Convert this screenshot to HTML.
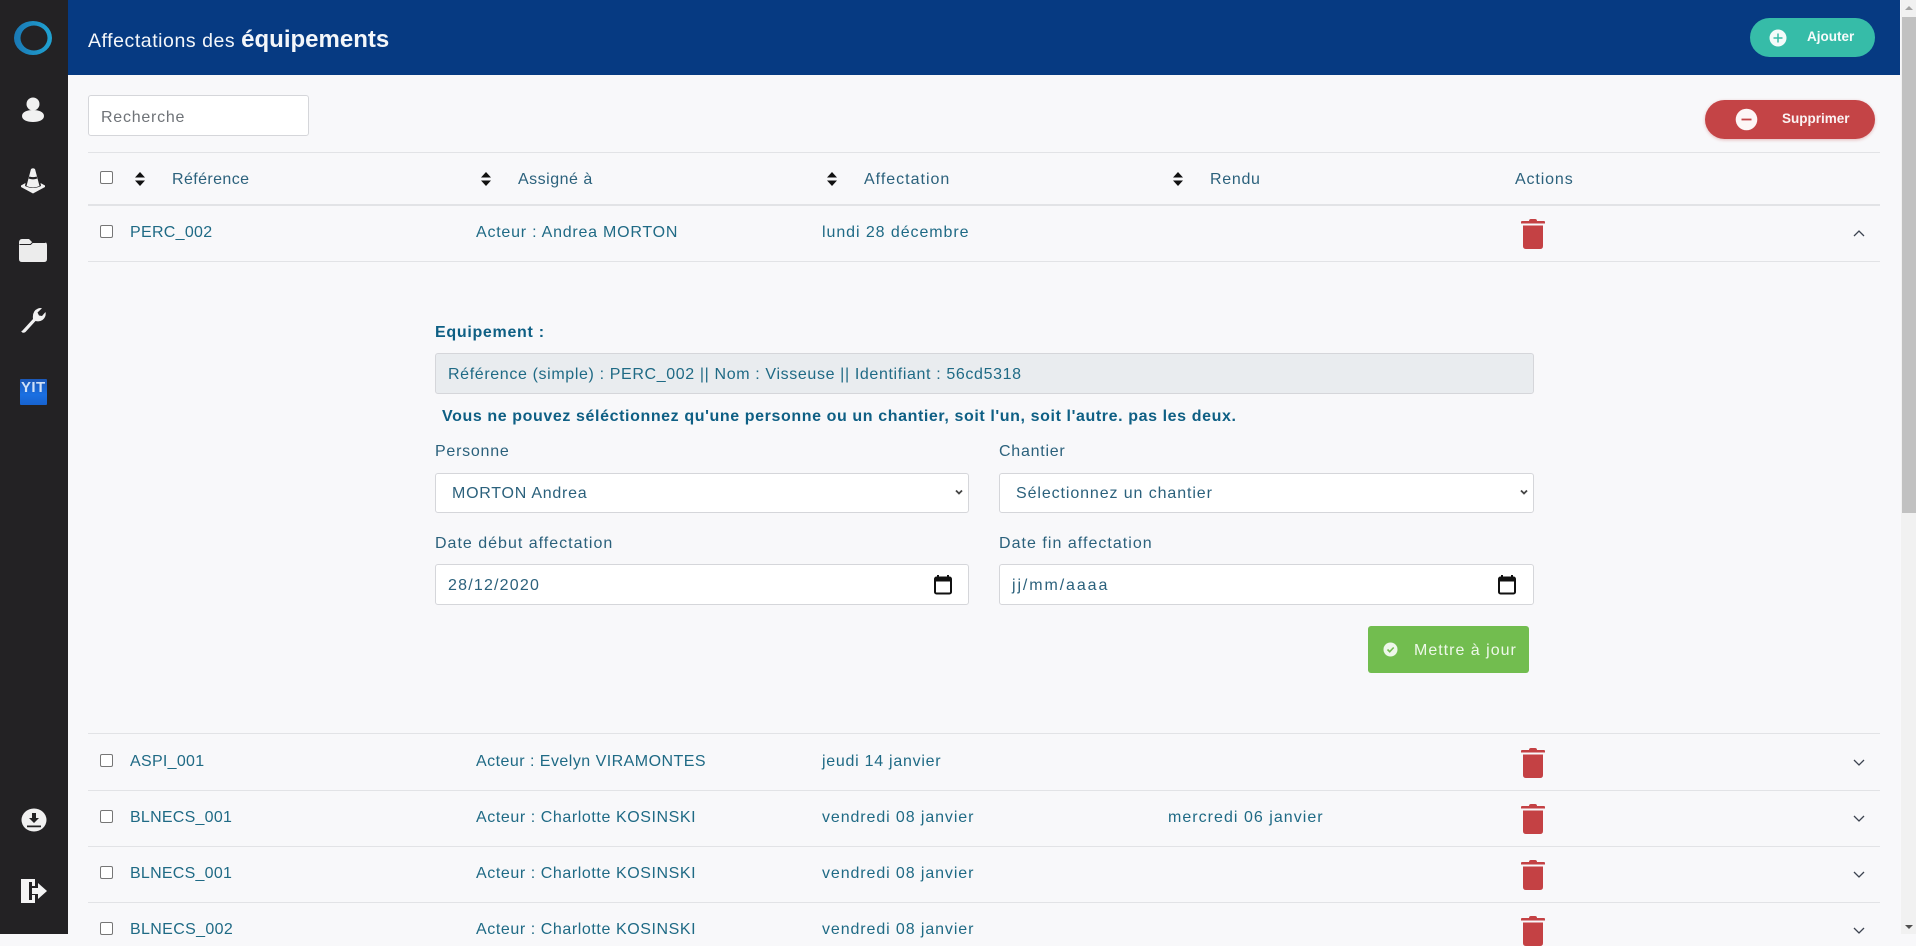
<!DOCTYPE html>
<html lang="fr"><head><meta charset="utf-8"><title>Affectations des équipements</title>
<style>
*{box-sizing:border-box}
html,body{margin:0;padding:0;width:1916px;height:934px;overflow:hidden;background:#f8f8fa;font-family:"Liberation Sans",sans-serif;color:#1f6a85}
.a{position:absolute;white-space:nowrap}
.t{position:absolute;white-space:nowrap;font-size:16px;line-height:20px;height:20px;color:#1f6a85;letter-spacing:.75px}
.h{color:#2b617c}
.l{position:absolute;left:88px;width:1792px;height:1px;background:#e2e3e6}
.box{position:absolute;background:#fff;border:1px solid #d5d6da;border-radius:3px}
.cb{position:absolute;left:100px;width:13px;height:13px;border:1px solid #767676;border-radius:2px;background:#fff}
svg{position:absolute;display:block}
</style></head><body>

<!-- sidebar -->
<div class="a" style="left:0;top:0;width:68px;height:934px;background:#232224"></div>
<svg style="left:13px;top:20px" width="40" height="36" viewBox="0 0 40 36"><defs><linearGradient id="lg" x1="0" x2="1" y1="0" y2="0"><stop offset="0" stop-color="#1a78b4"/><stop offset="1" stop-color="#20a3d2"/></linearGradient></defs><path fill-rule="evenodd" fill="url(#lg)" d="M1 18a19 17 0 1 0 38 0a19 17 0 1 0-38 0zM7.500 18a13.500 12.500 0 1 1 27 0a13.500 12.500 0 1 1-27 0z"/></svg>
<svg style="left:21px;top:97px" width="24" height="26" viewBox="0 0 24 26" fill="#f1f1f1"><circle cx="12" cy="7" r="6.500"/><path d="M1 19c0-4 5-6 11-6s11 2 11 6-5 6-11 6-11-2-11-6z"/></svg>
<svg style="left:21px;top:168px" width="24" height="26" viewBox="0 0 24 26"><path d="M0 17.500 4.500 15 4 18q8 4 16 0l-.5-3 4.500 2.500V19l-12 6.500L0 19z" fill="#f1f1f1"/><path d="M10 1q2-1.500 4 0l4.500 17q-6.500 3-13 0z" fill="#f1f1f1"/><path d="M8 9.500q4 1.500 8 0" stroke="#232224" stroke-width="2.200" fill="none"/></svg>
<svg style="left:18px;top:238px" width="30" height="25" viewBox="0 0 30 25"><path d="M1 5q0-4 3-4h7l3 3h12q3 0 3 3v14q0 3-3 3H4q-3 0-3-3z" fill="#ececec"/><path d="M1.500 6.500h11l2-2h13" stroke="#232224" stroke-width="1" fill="none"/></svg>
<svg style="left:20px;top:306px" width="26" height="27" viewBox="0 0 26 27"><path d="M2 25 13 13Q12 5 18 2.500q2-.8 4-.3L17.500 6.500l1.500 3 3 .5 3.500-4q1 5-3 8-3 2-7 1L5.500 26Q3 27.500 1.800 26T2 25z" fill="#f1f1f1"/></svg>
<div class="a" style="left:20px;top:379px;width:27px;height:26px;background:linear-gradient(#1b58b8,#1a6fe2 60%,#1763cf);border-radius:1px"></div>
<div class="a" style="left:21px;top:381px;width:26px;font:bold 15px/14px 'Liberation Sans',sans-serif;color:#cfe0f7;letter-spacing:.4px">YIT</div>

<svg style="left:21px;top:808px" width="26" height="24" viewBox="0 0 26 24"><ellipse cx="13" cy="12" rx="12.500" ry="11.500" fill="#f1f1f1"/><path d="M11 5h4v5h3l-5 5-5-5h3zM6 17.500h14v1.800H6z" fill="#232224"/></svg>
<svg style="left:20px;top:878px" width="28" height="26" viewBox="0 0 28 26" fill="#f4f4f4"><path d="M1 1h14v7h-3V4l-3 0v18l3 0v-5h3v8H1z"/><path d="M12 10h6V5l9 8-9 8v-5h-6z"/><path d="M1 1l8 3v21H1z"/></svg>

<!-- header -->
<div class="a" style="left:68px;top:0;width:1832px;height:75px;background:#063a82"></div>
<div class="t" style="left:88px;top:28px;font-size:19.500px;line-height:24px;height:24px;color:#f3f6fa;letter-spacing:.55px">Affectations des <span style="font-weight:bold;font-size:24px;letter-spacing:0">équipements</span></div>
<div class="a" style="left:1750px;top:18px;width:125px;height:39px;border-radius:20px;background:#36bca8"></div>
<svg style="left:1769px;top:29px" width="18" height="18" viewBox="0 0 18 18"><circle cx="9" cy="9" r="8.500" fill="#f4fbfa"/><path d="M9 4.500v9M4.500 9h9" stroke="#36bca8" stroke-width="1.500"/></svg>
<div class="t" style="left:1807px;top:27px;font-size:13.500px;font-weight:bold;color:#f7fbfb;letter-spacing:0">Ajouter</div>

<!-- scrollbar -->
<div class="a" style="left:1901px;top:0;width:15px;height:934px;background:#f1f1f1"></div>
<div class="a" style="left:1902px;top:17px;width:14px;height:496px;background:#c1c1c1"></div>
<svg style="left:1904px;top:5px" width="10" height="6" viewBox="0 0 10 6"><path d="M1 5l4-4 4 4z" fill="#a3a3a3"/></svg>
<svg style="left:1904px;top:924px" width="10" height="6" viewBox="0 0 10 6"><path d="M1 1l4 4 4-4z" fill="#505050"/></svg>

<!-- toolbar -->
<div class="box" style="left:88px;top:95px;width:221px;height:41px"></div>
<div class="t" style="left:101px;top:108px;color:#6f7378">Recherche</div>
<div class="a" style="left:1705px;top:100px;width:170px;height:39px;border-radius:20px;background:#c44446;box-shadow:0 1px 3px rgba(196,68,70,.35)"></div>
<svg style="left:1735px;top:108px" width="23" height="23" viewBox="0 0 23 23"><circle cx="11.500" cy="11.500" r="10.800" fill="#fdf6f6"/><path d="M6.500 11.500h10" stroke="#c44446" stroke-width="1.800"/></svg>
<div class="t" style="left:1782px;top:109px;font-size:13.500px;font-weight:bold;color:#fbf3f3;letter-spacing:0">Supprimer</div>

<!-- table head -->
<div class="l" style="top:152px"></div>
<div class="cb" style="top:171px"></div>
<svg style="left:135px;top:172px" width="10" height="14" viewBox="0 0 10 14"><path d="M5 0l5 5.500H0zM5 14l5-5.500H0z" fill="#111"/></svg>
<svg style="left:481px;top:172px" width="10" height="14" viewBox="0 0 10 14"><path d="M5 0l5 5.500H0zM5 14l5-5.500H0z" fill="#111"/></svg>
<svg style="left:827px;top:172px" width="10" height="14" viewBox="0 0 10 14"><path d="M5 0l5 5.500H0zM5 14l5-5.500H0z" fill="#111"/></svg>
<svg style="left:1173px;top:172px" width="10" height="14" viewBox="0 0 10 14"><path d="M5 0l5 5.500H0zM5 14l5-5.500H0z" fill="#111"/></svg>
<div class="t h" style="left:172px;top:170px;letter-spacing:.4px">Référence</div>
<div class="t h" style="left:518px;top:170px;letter-spacing:.5px">Assigné à</div>
<div class="t h" style="left:864px;top:170px;letter-spacing:1px">Affectation</div>
<div class="t h" style="left:1210px;top:170px;letter-spacing:.7px">Rendu</div>
<div class="t h" style="left:1515px;top:170px;letter-spacing:.87px">Actions</div>
<div class="l" style="top:204px;height:2px"></div>

<!-- row 1 -->
<div class="cb" style="top:225px"></div>
<div class="t" style="left:130px;top:223px;letter-spacing:.3px">PERC_002</div>
<div class="t" style="left:476px;top:223px;letter-spacing:.77px">Acteur : Andrea MORTON</div>
<div class="t" style="left:822px;top:223px;letter-spacing:.93px">lundi 28 décembre</div>
<svg style="left:1521px;top:219px" width="24" height="30" viewBox="0 0 24 30"><path d="M8 2q0-2 2-2h4q2 0 2 2h7q1 0 1 1v1.500H0V3q0-1 1-1zM2 6.500h20V27q0 3-3 3H5q-3 0-3-3z" fill="#c44144"/></svg>
<svg style="left:1853px;top:229px" width="12" height="8" viewBox="0 0 12 8"><path d="M1 7l5-5 5 5" fill="none" stroke="#3c4350" stroke-width="1.300"/></svg>
<div class="l" style="top:261px"></div>

<!-- form -->
<div class="t" style="left:435px;top:323px;font-weight:bold;color:#0e5f84;letter-spacing:.7px">Equipement :</div>
<div class="a" style="left:435px;top:353px;width:1099px;height:41px;background:#e9ecef;border:1px solid #d5d6da;border-radius:3px"></div>
<div class="t" style="left:448px;top:365px;letter-spacing:.63px">Référence (simple) : PERC_002 || Nom : Visseuse || Identifiant : 56cd5318</div>
<div class="t" style="left:442px;top:407px;font-weight:bold;color:#0e5f84;letter-spacing:.6px">Vous ne pouvez séléctionnez qu'une personne ou un chantier, soit l'un, soit l'autre. pas les deux.</div>

<div class="t h" style="left:435px;top:442px">Personne</div>
<div class="t h" style="left:999px;top:442px">Chantier</div>
<div class="box" style="left:435px;top:473px;width:534px;height:40px"></div>
<div class="t h" style="left:452px;top:484px">MORTON Andrea</div>
<svg style="left:955px;top:489px" width="8" height="7" viewBox="0 0 8 7"><path d="M1 1.500l3 3 3-3" fill="none" stroke="#444" stroke-width="1.800"/></svg>
<div class="box" style="left:999px;top:473px;width:535px;height:40px"></div>
<div class="t h" style="left:1016px;top:484px;letter-spacing:.9px">Sélectionnez un chantier</div>
<svg style="left:1520px;top:489px" width="8" height="7" viewBox="0 0 8 7"><path d="M1 1.500l3 3 3-3" fill="none" stroke="#444" stroke-width="1.800"/></svg>

<div class="t h" style="left:435px;top:534px;letter-spacing:1px">Date début affectation</div>
<div class="t h" style="left:999px;top:534px;letter-spacing:1.03px">Date fin affectation</div>
<div class="box" style="left:435px;top:564px;width:534px;height:41px"></div>
<div class="t h" style="left:448px;top:576px;letter-spacing:1.2px">28/12/2020</div>
<svg style="left:933px;top:574px" width="20" height="21" viewBox="0 0 20 21"><path d="M5 1v3M15 1v3" stroke="#111" stroke-width="2"/><rect x="2" y="3.500" width="16" height="16" rx="1.500" fill="none" stroke="#111" stroke-width="2"/><rect x="2" y="3.500" width="16" height="4" fill="#111"/></svg>
<div class="box" style="left:999px;top:564px;width:535px;height:41px"></div>
<div class="t h" style="left:1012px;top:576px;letter-spacing:1.9px">jj/mm/aaaa</div>
<svg style="left:1497px;top:574px" width="20" height="21" viewBox="0 0 20 21"><path d="M5 1v3M15 1v3" stroke="#111" stroke-width="2"/><rect x="2" y="3.500" width="16" height="16" rx="1.500" fill="none" stroke="#111" stroke-width="2"/><rect x="2" y="3.500" width="16" height="4" fill="#111"/></svg>

<div class="a" style="left:1368px;top:626px;width:161px;height:47px;background:#72bd4f;border-radius:3px"></div>
<svg style="left:1383px;top:642px" width="15" height="15" viewBox="0 0 15 15"><circle cx="7.500" cy="7.500" r="7" fill="#eef7ea"/><path d="M4.500 7.500l2.200 2.200 4-4.200" fill="none" stroke="#72bd4f" stroke-width="1.600"/></svg>
<div class="t" style="left:1414px;top:641px;width:105px;overflow:hidden;color:#eef8e9;letter-spacing:1px">Mettre à jour</div>

<!-- rows -->
<div class="l" style="top:733px"></div>
<div class="cb" style="top:754px"></div>
<div class="t" style="left:130px;top:752px;letter-spacing:.3px">ASPI_001</div>
<div class="t" style="left:476px;top:752px;letter-spacing:.47px">Acteur : Evelyn VIRAMONTES</div>
<div class="t" style="left:822px;top:752px;letter-spacing:.73px">jeudi 14 janvier</div>
<svg style="left:1521px;top:748px" width="24" height="30" viewBox="0 0 24 30"><path d="M8 2q0-2 2-2h4q2 0 2 2h7q1 0 1 1v1.500H0V3q0-1 1-1zM2 6.500h20V27q0 3-3 3H5q-3 0-3-3z" fill="#c44144"/></svg>
<svg style="left:1853px;top:759px" width="12" height="8" viewBox="0 0 12 8"><path d="M1 1l5 5 5-5" fill="none" stroke="#3c4350" stroke-width="1.300"/></svg>

<div class="l" style="top:790px"></div>
<div class="cb" style="top:810px"></div>
<div class="t" style="left:130px;top:808px;letter-spacing:.25px">BLNECS_001</div>
<div class="t" style="left:476px;top:808px;letter-spacing:.58px">Acteur : Charlotte KOSINSKI</div>
<div class="t" style="left:822px;top:808px;letter-spacing:.9px">vendredi 08 janvier</div>
<div class="t" style="left:1168px;top:808px;letter-spacing:1.03px">mercredi 06 janvier</div>
<svg style="left:1521px;top:804px" width="24" height="30" viewBox="0 0 24 30"><path d="M8 2q0-2 2-2h4q2 0 2 2h7q1 0 1 1v1.500H0V3q0-1 1-1zM2 6.500h20V27q0 3-3 3H5q-3 0-3-3z" fill="#c44144"/></svg>
<svg style="left:1853px;top:815px" width="12" height="8" viewBox="0 0 12 8"><path d="M1 1l5 5 5-5" fill="none" stroke="#3c4350" stroke-width="1.300"/></svg>

<div class="l" style="top:846px"></div>
<div class="cb" style="top:866px"></div>
<div class="t" style="left:130px;top:864px;letter-spacing:.25px">BLNECS_001</div>
<div class="t" style="left:476px;top:864px;letter-spacing:.58px">Acteur : Charlotte KOSINSKI</div>
<div class="t" style="left:822px;top:864px;letter-spacing:.9px">vendredi 08 janvier</div>
<svg style="left:1521px;top:860px" width="24" height="30" viewBox="0 0 24 30"><path d="M8 2q0-2 2-2h4q2 0 2 2h7q1 0 1 1v1.500H0V3q0-1 1-1zM2 6.500h20V27q0 3-3 3H5q-3 0-3-3z" fill="#c44144"/></svg>
<svg style="left:1853px;top:871px" width="12" height="8" viewBox="0 0 12 8"><path d="M1 1l5 5 5-5" fill="none" stroke="#3c4350" stroke-width="1.300"/></svg>

<div class="l" style="top:902px"></div>
<div class="cb" style="top:922px"></div>
<div class="t" style="left:130px;top:920px;letter-spacing:.35px">BLNECS_002</div>
<div class="t" style="left:476px;top:920px;letter-spacing:.58px">Acteur : Charlotte KOSINSKI</div>
<div class="t" style="left:822px;top:920px;letter-spacing:.9px">vendredi 08 janvier</div>
<svg style="left:1521px;top:916px" width="24" height="30" viewBox="0 0 24 30"><path d="M8 2q0-2 2-2h4q2 0 2 2h7q1 0 1 1v1.500H0V3q0-1 1-1zM2 6.500h20V27q0 3-3 3H5q-3 0-3-3z" fill="#c44144"/></svg>
<svg style="left:1853px;top:927px" width="12" height="7" viewBox="0 0 12 7"><path d="M1 1l5 5 5-5" fill="none" stroke="#3c4350" stroke-width="1.300"/></svg>
</body></html>
